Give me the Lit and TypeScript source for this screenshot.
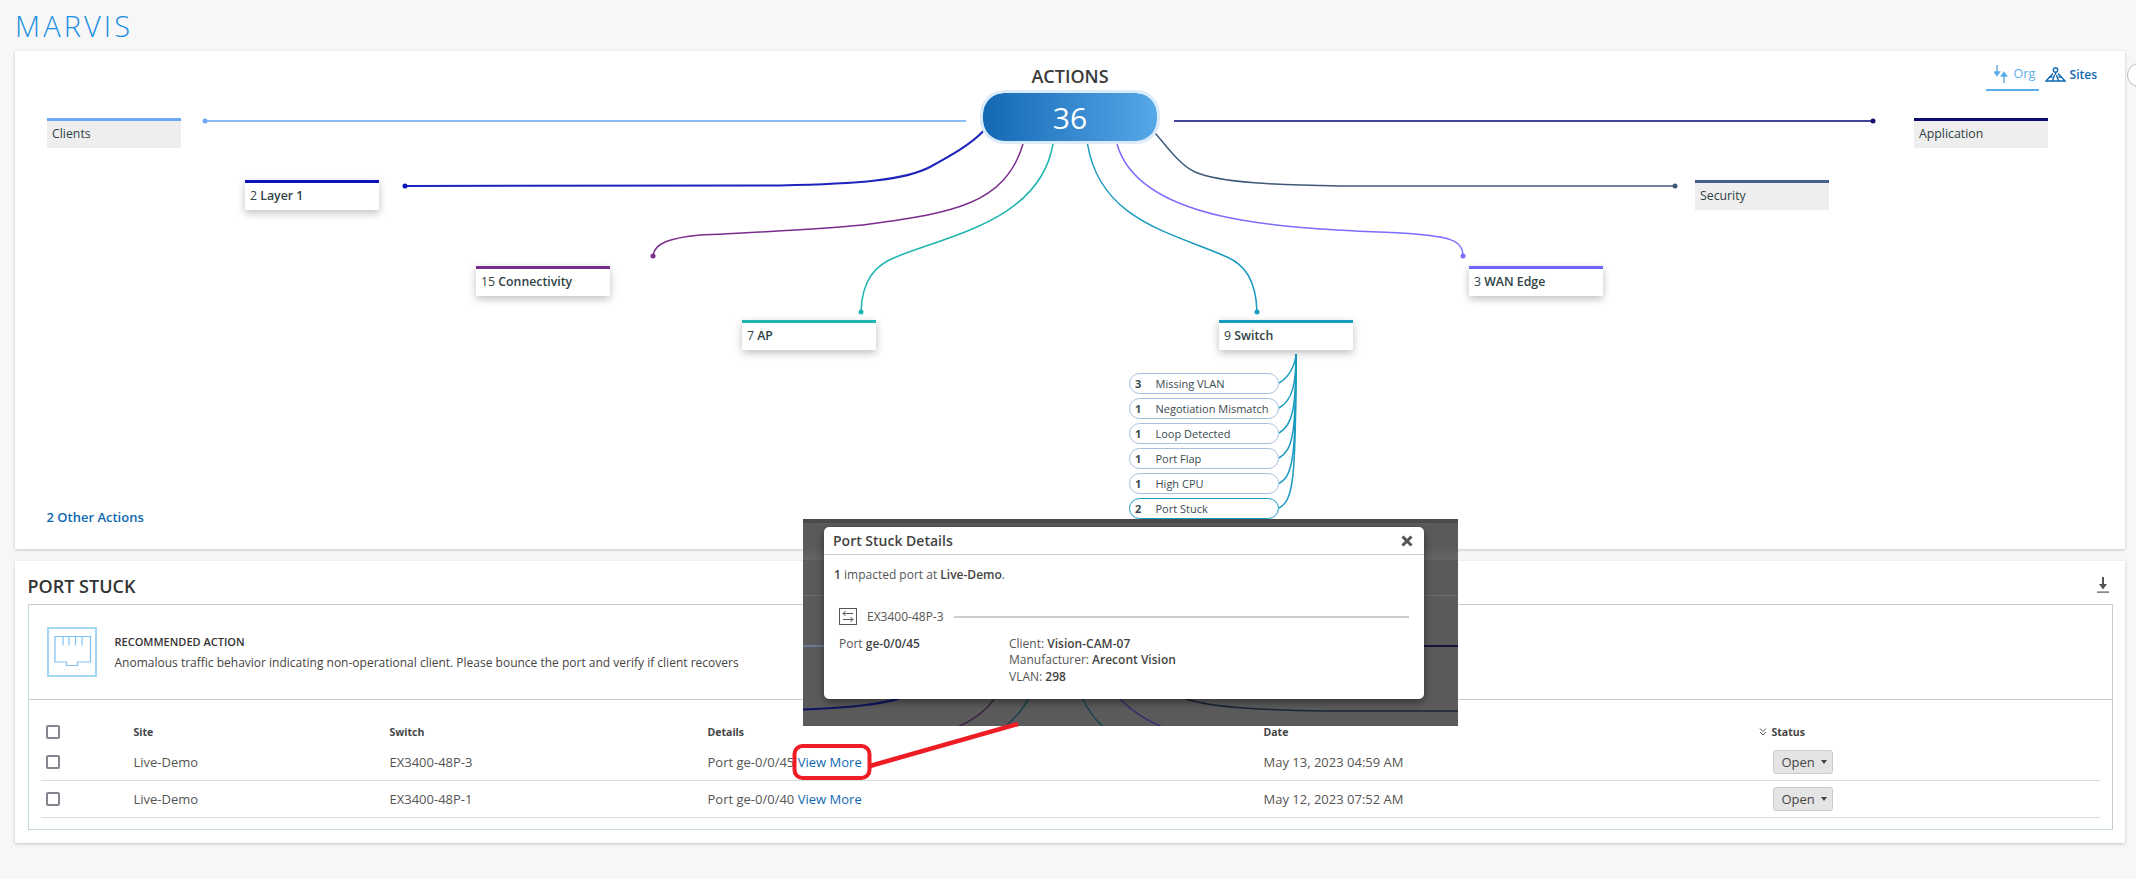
import { LitElement, html, css, svg } from "lit";
import { customElement } from "lit/decorators.js";

const CURVES = [
  { c: "#8bbcf8", w: 2, d: "M205 121 L966 121", dot: [205, 121], dc: "#6daaf5" },
  { c: "#1c23bd", w: 2, d: "M405 186 L780 185.5 C860 184 905 180 930 167 C950 156 970 145 983.5 131", dot: [405, 186], dc: "#0a14b8" },
  { c: "#7b2d8e", w: 1.5, d: "M653 256 C654 243 670 238 700 235 C760 232 834 229 870 224 C950 213 1005 205 1023 144", dot: [653, 256], dc: "#7b2d8e" },
  { c: "#1fb5b0", w: 1.5, d: "M861 312 C862 280 875 265 896 257 C950 235 1040 220 1053 144", dot: [861, 312], dc: "#1fb5b0" },
  { c: "#1a9bc0", w: 1.5, d: "M1257 312 C1256 280 1245 265 1227 257 C1170 232 1100 220 1087.5 144", dot: [1257, 312], dc: "#1a9bc0" },
  { c: "#7a6cff", w: 1.5, d: "M1463 256 C1463 240 1450 236 1400 233 C1290 228 1140 225 1117 144", dot: [1463, 256], dc: "#7a6cff" },
  { c: "#40597a", w: 1.5, d: "M1675 186 L1340 186 C1280 185 1220 183 1195 172 C1180 165 1170 150 1155 133", dot: [1675, 186], dc: "#40597a" },
  { c: "#44449a", w: 2, d: "M1174 121 L1873 121", dot: [1873, 121], dc: "#14126e" },
];

const DIM = ["#6c7a92", "#0f1560", "#3a2342", "#1a474c", "#184450", "#35306e", "#1c2634", "#15143c"];

const NODES = [
  { n: "", t: "Clients", x: 47, y: 118, w: 134, c: "#6daaf5", off: true },
  { n: "2", t: "Layer 1", x: 245, y: 180, w: 134, c: "#0a14b8" },
  { n: "15", t: "Connectivity", x: 476, y: 266, w: 134, c: "#7b2d8e" },
  { n: "7", t: "AP", x: 742, y: 320, w: 134, c: "#1fb5b0" },
  { n: "9", t: "Switch", x: 1219, y: 320, w: 134, c: "#1a9bc0" },
  { n: "3", t: "WAN Edge", x: 1469, y: 266, w: 134, c: "#6f65ff" },
  { n: "", t: "Security", x: 1695, y: 180, w: 134, c: "#45608a", off: true },
  { n: "", t: "Application", x: 1914, y: 118, w: 134, c: "#0d0d70", off: true },
];

const SUBS = [
  ["3", "Missing VLAN"],
  ["1", "Negotiation Mismatch"],
  ["1", "Loop Detected"],
  ["1", "Port Flap"],
  ["1", "High CPU"],
  ["2", "Port Stuck"],
];

const ROWS = [
  ["Live-Demo", "EX3400-48P-3", "Port ge-0/0/45", "May 13, 2023 04:59 AM"],
  ["Live-Demo", "EX3400-48P-1", "Port ge-0/0/40", "May 12, 2023 07:52 AM"],
];

@customElement("app-root")
export class AppRoot extends LitElement {
  static styles = css`
    :host {
      display: block;
      position: relative;
      width: 2136px;
      height: 879px;
      overflow: hidden;
      background: #f7f7f7;
      font-family: "Open Sans", "Noto Sans", sans-serif;
      font-size: 12px;
      color: #555;
    }
    .brand {
      height: 51px;
      box-sizing: border-box;
      padding: 7px 0 0 15px;
      font-size: 29px;
      line-height: 38px;
      font-weight: 300;
      letter-spacing: 3.1px;
      color: #1a8fe3;
    }
    .card {
      background: #fff;
      margin: 0 11px 12px 15px;
      box-shadow: 0 1px 3px rgba(0, 0, 0, 0.2);
      position: relative;
    }
    .graph {
      height: 498px;
    }
    .graph > svg {
      position: absolute;
      left: 0;
      top: 0;
    }
    .heading {
      position: absolute;
      left: 0;
      right: 0;
      top: 13px;
      text-align: center;
      font-size: 18px;
      line-height: 24px;
      font-weight: 600;
      color: #3a3a3a;
    }
    .pill {
      position: absolute;
      left: 965px;
      top: 39px;
      width: 180px;
      height: 54px;
      box-sizing: border-box;
      border: 3px solid #dcebfa;
      border-radius: 24px;
      background: linear-gradient(90deg, #1468b4, #56a8e8);
      background-clip: padding-box;
      color: #fff;
      font-size: 30px;
      display: flex;
      align-items: center;
      justify-content: center;
    }
    .node {
      position: absolute;
      box-sizing: border-box;
      height: 30px;
      border-top: 3px solid;
      background: #fff;
      box-shadow: 0 3px 8px rgba(0, 0, 0, 0.25);
      padding: 0 5px;
      font-size: 12.3px;
      line-height: 26px;
      color: #2f4245;
    }
    .node b {
      font-weight: 600;
    }
    .node.off {
      background: #eee;
      box-shadow: none;
    }
    .subs {
      position: absolute;
      left: 1114px;
      top: 322px;
      display: flex;
      flex-direction: column;
      gap: 4px;
    }
    .sub {
      box-sizing: border-box;
      width: 150px;
      height: 21px;
      border: 1px solid #a8bfe0;
      border-radius: 11px;
      display: flex;
      align-items: center;
      font-size: 11px;
      color: #3a4a4f;
      padding-left: 5px;
    }
    .sub b {
      width: 20.5px;
      font-weight: 700;
    }
    .sub.sel {
      border-color: #1a9bc0;
    }
    .other {
      position: absolute;
      left: 31.5px;
      top: 457px;
      font-size: 13px;
      line-height: 18px;
      font-weight: 600;
      color: #0f68b0;
    }
    .tabs {
      position: absolute;
      right: 28px;
      top: 9px;
      display: flex;
      gap: 6px;
    }
    .tab {
      height: 31px;
      box-sizing: border-box;
      display: flex;
      align-items: center;
      gap: 4px;
      padding-bottom: 2px;
      color: #0f68b0;
      font-weight: 600;
      font-size: 12px;
    }
    .tab.on {
      color: #5aade8;
      font-weight: 400;
      font-size: 12.5px;
      border-bottom: 2px solid #5aade8;
      padding: 0 0 2px 8px;
      width: 53px;
    }
    .edge {
      position: absolute;
      left: 2127px;
      top: 63px;
      width: 24px;
      height: 24px;
      border-radius: 50%;
      background: #fff;
      border: 1px solid #bbb;
      box-sizing: border-box;
    }
    .detail {
      height: 282px;
      box-sizing: border-box;
      padding: 0 12px 13px 12.5px;
      margin-bottom: 0;
      display: flex;
      flex-direction: column;
    }
    .detail-head {
      height: 43px;
      display: flex;
      align-items: center;
      justify-content: space-between;
      padding-top: 7px;
      box-sizing: border-box;
      font-size: 18px;
      font-weight: 600;
      color: #333;
    }
    .detail-head svg {
      margin: -3px 3px 0 0;
    }
    .box {
      flex: 1;
      border: 1px solid #c5d8e0;
      border-top-color: #ccc;
      border-right-color: #ccc;
      display: flex;
      flex-direction: column;
    }
    .rec {
      height: 95px;
      box-sizing: border-box;
      border-bottom: 1px solid #ccc;
      display: flex;
      align-items: center;
      padding: 0 0 0 18px;
      gap: 18px;
    }
    .rec-label {
      font-size: 11px;
      font-weight: 600;
      color: #333;
      line-height: 16px;
      margin-bottom: 5px;
    }
    .rec-text {
      font-size: 12px;
      line-height: 16px;
      color: #444;
    }
    .table {
      padding: 21px 12px 0 12px;
    }
    .row {
      display: grid;
      grid-template-columns: 87px 256px 318px 556px 495px 1fr;
      align-items: center;
      padding-left: 6px;
      font-size: 13px;
      color: #555;
    }
    .row.body {
      height: 37px;
      border-bottom: 1px solid #ddd;
      box-sizing: border-box;
    }
    .row.head {
      height: 23px;
      padding-bottom: 2px;
      box-sizing: border-box;
      font-size: 10.5px;
      font-weight: 700;
      color: #444;
    }
    .check {
      display: block;
      width: 14px;
      height: 14px;
      box-sizing: border-box;
      margin-left: -1px;
      border: 2px solid #85858f;
      border-radius: 2px;
    }
    .link {
      color: #0f68b0;
      margin-left: 3.5px;
    }
    .status {
      display: flex;
      align-items: center;
      gap: 5px;
    }
    .btn {
      box-sizing: border-box;
      width: 60px;
      height: 24px;
      margin-left: 14px;
      background: #e4e4e4;
      border: 1px solid #ccc;
      border-radius: 3px;
      display: flex;
      align-items: center;
      padding-left: 8px;
      gap: 6px;
      color: #444;
      font-size: 13px;
    }
    .caret {
      width: 0;
      height: 0;
      border-left: 3.5px solid transparent;
      border-right: 3.5px solid transparent;
      border-top: 4px solid #444;
    }
    .overlay {
      position: absolute;
      left: 803px;
      top: 519px;
      width: 655px;
      height: 207px;
      background: #5b5b5b;
      overflow: hidden;
    }
    .overlay .strip {
      height: 4px;
      background: #4b4b4b;
    }
    .overlay .band {
      margin-top: 25px;
      height: 12px;
      background: linear-gradient(180deg, #5b5b5b, #666);
    }
    .overlay .rule {
      margin-top: 35px;
      height: 1px;
      background: #6c6c6c;
    }
    .overlay svg {
      position: absolute;
      left: 0;
      top: 0;
    }
    .modal {
      position: absolute;
      left: 824px;
      top: 527px;
      width: 600px;
      height: 172px;
      background: #fff;
      border-radius: 5px;
      box-shadow: 0 3px 8px rgba(0, 0, 0, 0.45);
      color: #555;
      font-size: 12px;
    }
    .modal-head {
      height: 28px;
      box-sizing: border-box;
      border-bottom: 1px solid #ccc;
      display: flex;
      align-items: center;
      justify-content: space-between;
      padding: 0 11px 0 9px;
      font-size: 14px;
      font-weight: 600;
      color: #444;
    }
    .modal-body {
      padding: 11px 15px 0 10px;
      line-height: 17px;
    }
    .modal b {
      font-weight: 600;
      color: #444;
    }
    .device {
      margin: 25px 0 0 5px;
      display: flex;
      align-items: center;
      gap: 10px;
    }
    .device i {
      flex: 1;
      height: 2px;
      background: #ccc;
    }
    .meta {
      display: grid;
      grid-template-columns: 170px 1fr;
      margin: 10.5px 0 0 5px;
      line-height: 16.5px;
    }
    .mark {
      position: absolute;
      left: 0;
      top: 0;
      pointer-events: none;
    }
  `;

  private renderCurves(colors?: string[]) {
    return CURVES.map(
      (c, i) => svg`
        <path d=${c.d} fill="none" stroke=${colors ? colors[i] : c.c} stroke-width=${c.w}></path>
        ${colors
          ? ""
          : svg`<circle cx=${c.dot[0]} cy=${c.dot[1]} r="2.5" fill=${c.dc}></circle>`}
      `
    );
  }

  private renderBranches() {
    const ys = [383, 408, 433, 458, 483.5, 508];
    return svg`
      <path d="M1296 354 L1296 372" fill="none" stroke="#1a9bc0" stroke-width="2"></path>
      ${ys.map((y) => {
        const d = `M1296 354 C1296 ${y - 25} ${1296 - 3} ${y - 8} 1279 ${y}`;
        return svg`<path d=${d} fill="none" stroke="#1a9bc0" stroke-width="1.5"></path>`;
      })}
    `;
  }

  render() {
    return html`
      <div class="brand">MARVIS</div>

      <section class="card graph">
        <svg width="2110" height="498" viewBox="15 51 2110 498">
          ${this.renderCurves()} ${this.renderBranches()}
        </svg>
        <div class="heading">ACTIONS</div>
        <div class="pill">36</div>
        ${NODES.map(
          (n) => html`
            <div
              class="node ${n.off ? "off" : ""}"
              style="left:${n.x - 15}px;top:${n.y - 51}px;width:${n.w}px;border-top-color:${n.c}"
            >
              ${n.n ? html`${n.n} <b>${n.t}</b>` : n.t}
            </div>
          `
        )}
        <div class="subs">
          ${SUBS.map(
            (s, i) => html`
              <div class="sub ${i === 5 ? "sel" : ""}"><b>${s[0]}</b>${s[1]}</div>
            `
          )}
        </div>
        <div class="other">2 Other Actions</div>
        <div class="tabs">
          <div class="tab on">
            <svg width="16" height="20" viewBox="0 0 16 20" fill="none" stroke="#5aade8" stroke-width="1.4">
              <path d="M3 1 V11"></path>
              <path d="M0.5 8 L3 11.5 L5.5 8 Z" fill="#5aade8"></path>
              <path d="M10 19 V9"></path>
              <path d="M7.5 12 L10 8.5 L12.5 12 Z" fill="#5aade8"></path>
            </svg>
            Org
          </div>
          <div class="tab">
            <svg width="21" height="15" viewBox="0 0 21 15" fill="none" stroke="#0f68b0" stroke-width="1.4">
              <circle cx="10.5" cy="3" r="2.2"></circle>
              <path d="M10.5 5.5 V8 M8 6.5 L1 14 H20 L13 6.5"></path>
              <path d="M7.5 14 L9.5 8 M13.5 14 L11.5 8 M4 10 H7.5 M13.5 10 H17"></path>
            </svg>
            Sites
          </div>
        </div>
      </section>

      <section class="card detail">
        <div class="detail-head">
          PORT STUCK
          <svg width="14" height="16" viewBox="0 0 14 16" fill="#555">
            <path d="M6 0 H8 V7 H11 L7 12.5 L3 7 H6 Z"></path>
            <rect x="1" y="14.5" width="12" height="1.2"></rect>
          </svg>
        </div>
        <div class="box">
          <div class="rec">
            <svg width="50" height="50" viewBox="0 0 50 50" fill="none">
              <rect x="1" y="1" width="48" height="48" stroke="#a5d5f5" stroke-width="2"></rect>
              <path
                d="M8 9.5 H43.5 V35 H30.5 V38.5 H19.5 V35 H8 Z M16 9.5 V18.5 M22 9.5 V18.5 M28.5 9.5 V18.5 M35 9.5 V18.5"
                stroke="#7cc2f2"
                stroke-width="1.2"
              ></path>
            </svg>
            <div>
              <div class="rec-label">RECOMMENDED ACTION</div>
              <div class="rec-text">
                Anomalous traffic behavior indicating non-operational client. Please bounce the port and
                verify if client recovers
              </div>
            </div>
          </div>
          <div class="table">
            <div class="row head">
              <span class="check"></span><span>Site</span><span>Switch</span><span>Details</span
              ><span>Date</span>
              <span class="status">
                <svg width="8" height="8" viewBox="0 0 8 8" fill="none" stroke="#555" stroke-width="1">
                  <path d="M1 0.5 L4 3.5 L7 0.5 M1 4 L4 7 L7 4"></path>
                </svg>
                Status
              </span>
            </div>
            ${ROWS.map(
              (r) => html`
                <div class="row body">
                  <span class="check"></span><span>${r[0]}</span><span>${r[1]}</span>
                  <span>${r[2]}<span class="link">View More</span></span>
                  <span>${r[3]}</span>
                  <span class="btn">Open<span class="caret"></span></span>
                </div>
              `
            )}
          </div>
        </div>
      </section>

      <div class="edge"></div>

      <div class="overlay">
        <div class="strip"></div>
        <div class="band"></div>
        <div class="rule"></div>
        <svg width="655" height="207" viewBox="817 -6 655 207">
          ${this.renderCurves(DIM)}
        </svg>
      </div>
      <div class="modal">
        <div class="modal-head">
          Port Stuck Details
          <svg width="12" height="12" viewBox="0 0 12 12" stroke="#555" stroke-width="3">
            <path d="M1.5 1.5 L10.5 10.5 M10.5 1.5 L1.5 10.5"></path>
          </svg>
        </div>
        <div class="modal-body">
          <div><b>1</b> impacted port at <b>Live-Demo</b>.</div>
          <div class="device">
            <svg width="18" height="17" viewBox="0 0 18 17" fill="none" stroke="#555" stroke-width="1">
              <rect x="0.5" y="0.5" width="17" height="16"></rect>
              <path d="M14 5.5 H4 M6.5 3 L4 5.5 L6.5 8 M4 11.5 H14 M11.5 9 L14 11.5 L11.5 14"></path>
            </svg>
            <span>EX3400-48P-3</span>
            <i></i>
          </div>
          <div class="meta">
            <div>Port <b>ge-0/0/45</b></div>
            <div>
              Client: <b>Vision-CAM-07</b><br />
              Manufacturer: <b>Arecont Vision</b><br />
              VLAN: <b>298</b>
            </div>
          </div>
        </div>
      </div>

      <svg class="mark" width="2136" height="879" viewBox="0 0 2136 879" fill="none" stroke="#ee1c25" stroke-width="4">
        <rect x="794.5" y="746" width="75" height="32" rx="8"></rect>
        <path d="M870 766 L1018 724" stroke-width="4.5"></path>
      </svg>
    `;
  }
}
